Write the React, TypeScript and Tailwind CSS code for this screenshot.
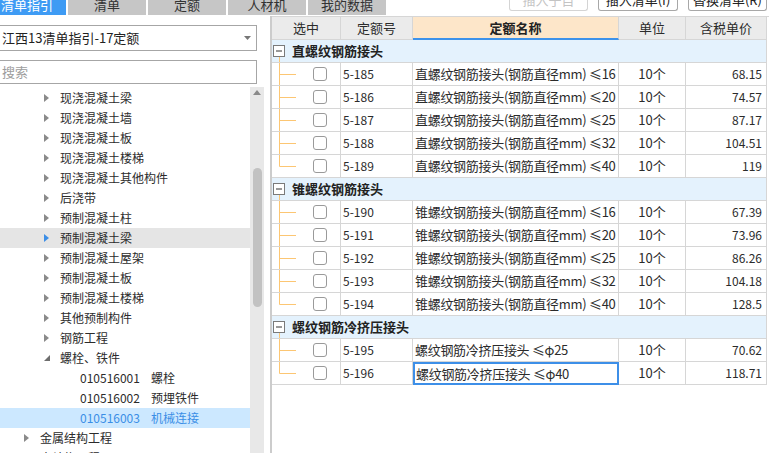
import React from "react";

type Node = {
  label: string;
  code?: string;
  indent: "top" | "mid" | "leaf";
  arrow: "closed" | "open" | "none";
  sel?: "gray" | "blue";
};

const tree: Node[] = [
  { label: "现浇混凝土梁", indent: "mid", arrow: "closed" },
  { label: "现浇混凝土墙", indent: "mid", arrow: "closed" },
  { label: "现浇混凝土板", indent: "mid", arrow: "closed" },
  { label: "现浇混凝土楼梯", indent: "mid", arrow: "closed" },
  { label: "现浇混凝土其他构件", indent: "mid", arrow: "closed" },
  { label: "后浇带", indent: "mid", arrow: "closed" },
  { label: "预制混凝土柱", indent: "mid", arrow: "closed" },
  { label: "预制混凝土梁", indent: "mid", arrow: "closed", sel: "gray" },
  { label: "预制混凝土屋架", indent: "mid", arrow: "closed" },
  { label: "预制混凝土板", indent: "mid", arrow: "closed" },
  { label: "预制混凝土楼梯", indent: "mid", arrow: "closed" },
  { label: "其他预制构件", indent: "mid", arrow: "closed" },
  { label: "钢筋工程", indent: "mid", arrow: "closed" },
  { label: "螺栓、铁件", indent: "mid", arrow: "open" },
  { label: "螺栓", code: "010516001", indent: "leaf", arrow: "none" },
  { label: "预埋铁件", code: "010516002", indent: "leaf", arrow: "none" },
  { label: "机械连接", code: "010516003", indent: "leaf", arrow: "none", sel: "blue" },
  { label: "金属结构工程", indent: "top", arrow: "closed" },
  { label: "木结构工程", indent: "top", arrow: "closed" },
];

type Row = { no: string; name: string; price: string; active?: boolean };
type Group = { title: string; rows: Row[] };

const groups: Group[] = [
  {
    title: "直螺纹钢筋接头",
    rows: [
      { no: "5-185", name: "直螺纹钢筋接头(钢筋直径mm) ≤16", price: "68.15" },
      { no: "5-186", name: "直螺纹钢筋接头(钢筋直径mm) ≤20", price: "74.57" },
      { no: "5-187", name: "直螺纹钢筋接头(钢筋直径mm) ≤25", price: "87.17" },
      { no: "5-188", name: "直螺纹钢筋接头(钢筋直径mm) ≤32", price: "104.51" },
      { no: "5-189", name: "直螺纹钢筋接头(钢筋直径mm) ≤40", price: "119" },
    ],
  },
  {
    title: "锥螺纹钢筋接头",
    rows: [
      { no: "5-190", name: "锥螺纹钢筋接头(钢筋直径mm) ≤16", price: "67.39" },
      { no: "5-191", name: "锥螺纹钢筋接头(钢筋直径mm) ≤20", price: "73.96" },
      { no: "5-192", name: "锥螺纹钢筋接头(钢筋直径mm) ≤25", price: "86.26" },
      { no: "5-193", name: "锥螺纹钢筋接头(钢筋直径mm) ≤32", price: "104.18" },
      { no: "5-194", name: "锥螺纹钢筋接头(钢筋直径mm) ≤40", price: "128.5" },
    ],
  },
  {
    title: "螺纹钢筋冷挤压接头",
    rows: [
      { no: "5-195", name: "螺纹钢筋冷挤压接头 ≤φ25", price: "70.62" },
      { no: "5-196", name: "螺纹钢筋冷挤压接头 ≤φ40", price: "118.71", active: true },
    ],
  },
];

function Arrow({ kind, blue }: { kind: Node["arrow"]; blue?: boolean }) {
  if (kind === "closed")
    return (
      <svg width="5" height="8" viewBox="0 0 5 8">
        <path d="M0 0 L5 4 L0 8 Z" fill={blue ? "#3c8ee6" : "#8a8a8a"} />
      </svg>
    );
  if (kind === "open")
    return (
      <svg width="6" height="6" viewBox="0 0 6 6">
        <path d="M6 0 L6 6 L0 6 Z" fill="#6e6e6e" />
      </svg>
    );
  return null;
}

function TreeRow({ n }: { n: Node }) {
  const bg = n.sel === "gray" ? "bg-[#e5e5e5]" : n.sel === "blue" ? "bg-[#cce8ff]" : "";
  const color = n.sel === "blue" ? "text-[#3a8ee6]" : "text-[#2b2b2b]";
  const pad = n.indent === "top" ? "pl-[24px]" : n.indent === "mid" ? "pl-[44px]" : "pl-[80px]";
  return (
    <div className={`flex items-center h-[20px] shrink-0 whitespace-nowrap ${bg} ${pad} ${color}`}>
      {n.code ? (
        <>
          <span className="w-[71px]">{n.code}</span>
          <span>{n.label}</span>
        </>
      ) : (
        <>
          <span className="w-[16px] flex items-center">
            <Arrow kind={n.arrow} blue={n.sel === "gray"} />
          </span>
          <span>{n.label}</span>
        </>
      )}
    </div>
  );
}

function Connector({ last }: { last: boolean }) {
  return (
    <svg width="24" height="22" viewBox="0 0 24 22" className="shrink-0">
      <line x1="7.5" y1="0" x2="7.5" y2={last ? 11.5 : 22} stroke="#fcc673" strokeWidth="1" />
      <line x1="7.5" y1="11.5" x2="24" y2="11.5" stroke="#fcc673" strokeWidth="1" />
    </svg>
  );
}

function GroupHead({ title }: { title: string }) {
  return (
    <div className="col-span-5 h-[23px] bg-[#e4f2fd] border-b border-r border-[#d6d6d6] flex items-center">
      <svg width="14" height="22" viewBox="0 0 14 22" className="shrink-0">
        <rect x="1.5" y="5.5" width="11" height="11" fill="#fff" stroke="#7a7a7a" />
        <line x1="4" y1="11" x2="10" y2="11" stroke="#333" strokeWidth="1" />
        <line x1="7.5" y1="17" x2="7.5" y2="22" stroke="#fcc673" strokeWidth="1" />
      </svg>
      <span className="ml-[6px] font-bold text-[#222]">{title}</span>
    </div>
  );
}

function DataRow({ r, last }: { r: Row; last: boolean }) {
  const cell = "h-[23px] border-b border-r border-[#d6d6d6] bg-white flex items-center";
  return (
    <>
      <div className={cell}>
        <Connector last={last} />
        <div className="ml-[17px] w-[14px] h-[14px] rounded-[3px] border border-[#9a9a9a] bg-white" />
      </div>
      <div className={`${cell} pl-[2px] text-[12px]`}>{r.no}</div>
      {r.active ? (
        <div className="h-[23px] border-2 border-[#3d8fe8] bg-white flex items-center pl-[1px] whitespace-nowrap overflow-hidden tracking-[-0.3px]">
          {r.name}
        </div>
      ) : (
        <div className={`${cell} pl-[2px] whitespace-nowrap overflow-hidden tracking-[-0.3px]`}>{r.name}</div>
      )}
      <div className={`${cell} justify-center`}>10个</div>
      <div className={`${cell} justify-end pr-[4px] text-[12px]`}>{r.price}</div>
    </>
  );
}

export default function App() {
  const tabs = ["清单指引", "清单", "定额", "人材机", "我的数据"];
  return (
    <div className="w-[769px] h-[453px] overflow-hidden bg-white flex flex-col font-['Microsoft_YaHei','Noto_Sans_CJK_SC',sans-serif] text-[#2b2b2b]">
      {/* top tab strip */}
      <div className="h-[16px] shrink-0 flex items-start">
        <div className="flex gap-[2px] -ml-[12px]">
          {tabs.map((t, i) => (
            <div
              key={t}
              className={
                i === 0
                  ? "w-[78px] h-[15px] overflow-hidden bg-[#3e9bf4] text-white text-[13px] text-center"
                  : "w-[78px] h-[15px] overflow-hidden bg-[#c6c6c6] text-[#333] text-[13px] text-center"
              }
            >
              <div className="leading-[15px] -mt-[3px]">{t}</div>
            </div>
          ))}
        </div>
        <div className="flex-1" />
        <div className="flex gap-[10px] mr-[2px]">
          <div className="w-[79px] h-[11px] overflow-hidden rounded-b-[3px] border border-t-0 border-[#d4d4d4] bg-white text-[#c4c4c4] text-[13px] text-center">
            <div className="leading-[13px] -mt-[7px]">插入子目</div>
          </div>
          <div className="w-[80px] h-[11px] overflow-hidden rounded-b-[3px] border border-t-0 border-[#a8a8a8] bg-white text-[#222] text-[13px] text-center">
            <div className="leading-[13px] -mt-[7px]">插入清单(I)</div>
          </div>
          <div className="w-[79px] h-[11px] overflow-hidden rounded-b-[3px] border border-t-0 border-[#a8a8a8] bg-white text-[#222] text-[13px] text-center">
            <div className="leading-[13px] -mt-[7px]">替换清单(R)</div>
          </div>
        </div>
      </div>

      <div className="flex flex-1 min-h-0">
        {/* left: guide tree */}
        <div className="w-[270px] shrink-0 flex flex-col text-[12px]">
          <div className="-ml-px mt-[9px] w-[258px] h-[26px] border border-[#a6a6a6] flex items-center pl-[2px] pr-[5px]">
            <span className="flex-1 text-[13px] text-[#222]">江西13清单指引-17定额</span>
            <svg width="7" height="4" viewBox="0 0 7 4">
              <path d="M0 0 L7 0 L3.5 4 Z" fill="#777" />
            </svg>
          </div>
          <div className="-ml-px mt-[9px] w-[258px] h-[24px] border border-[#a6a6a6] flex items-center pl-[2px]">
            <input
              placeholder="搜索"
              className="w-full outline-none bg-transparent text-[13px] placeholder:text-[#9d9d9d]"
            />
          </div>
          <div className="mt-[3px] flex flex-1 min-h-0 overflow-hidden">
            <div className="w-[250px] pt-px flex flex-col">
              {tree.map((n) => (
                <TreeRow key={n.label} n={n} />
              ))}
            </div>
            <div className="w-[14px] bg-[#e8e8e8] flex flex-col items-center">
              <svg width="8" height="5" viewBox="0 0 8 5" className="mt-[3px]">
                <path d="M0 5 L4 0 L8 5 Z" fill="#8a8a8a" />
              </svg>
              <div className="mt-[73px] w-[9px] h-[139px] rounded-full bg-[#c2c2c2]" />
            </div>
          </div>
        </div>

        {/* right: quota table */}
        <div className="flex-1 border-l-2 border-[#cccccc] text-[13px]">
          <div className="grid grid-cols-[69px_72px_206px_67px_81px] border-t border-[#d6d6d6]">
            <div className="h-[23px] bg-[#ebebeb] border-b border-r border-[#d6d6d6] flex items-center justify-center">选中</div>
            <div className="h-[23px] bg-[#ebebeb] border-b border-r border-[#d6d6d6] flex items-center justify-center">定额号</div>
            <div className="h-[23px] bg-[#fde6c9] border-b-2 border-r border-b-[#3d92ea] border-r-[#d6d6d6] flex items-center justify-center font-bold text-[#222]">定额名称</div>
            <div className="h-[23px] bg-[#ebebeb] border-b border-r border-[#d6d6d6] flex items-center justify-center">单位</div>
            <div className="h-[23px] bg-[#ebebeb] border-b border-r border-[#d6d6d6] flex items-center justify-center">含税单价</div>
            {groups.map((g) => (
              <React.Fragment key={g.title}>
                <GroupHead title={g.title} />
                {g.rows.map((r, i) => (
                  <DataRow key={r.no} r={r} last={i === g.rows.length - 1} />
                ))}
              </React.Fragment>
            ))}
          </div>
        </div>
      </div>
    </div>
  );
}
